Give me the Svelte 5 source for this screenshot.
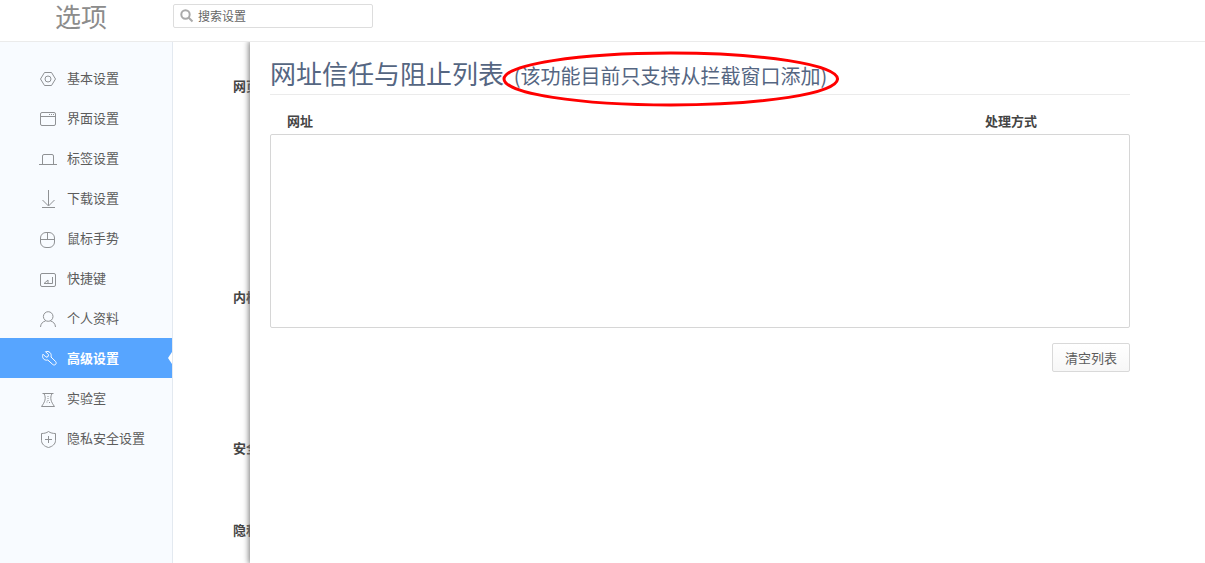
<script>
  const items = [
    { label: '基本设置', icon: 'hex' },
    { label: '界面设置', icon: 'window' },
    { label: '标签设置', icon: 'tab' },
    { label: '下载设置', icon: 'download' },
    { label: '鼠标手势', icon: 'mouse' },
    { label: '快捷键', icon: 'key' },
    { label: '个人资料', icon: 'user' },
    { label: '高级设置', icon: 'wrench' },
    { label: '实验室', icon: 'flask' },
    { label: '隐私安全设置', icon: 'shield' }
  ];
  const paths = {
    hex: 'M5.500 4.500h7l4 6.500-4 6.500h-7L1.500 11zM12 11a3 3 0 1 1-6 0 3 3 0 0 1 6 0z',
    window: 'M3 4.500h12a1.500 1.500 0 0 1 1.500 1.500v10a1.500 1.500 0 0 1-1.500 1.500H3A1.500 1.500 0 0 1 1.500 16V6A1.500 1.500 0 0 1 3 4.500zM1.500 8.500h15M10 6.500h1M12 6.500h1M14 6.500h1',
    tab: 'M0 16.500h18M3.500 16V8a1.500 1.500 0 0 1 1.500-1.500h8A1.500 1.500 0 0 1 14.500 8v8',
    download: 'M9.500 2v15.500M3.500 12l6 6 6-6M3 19.500h13',
    mouse: 'M7 4.500h3a5.500 5.500 0 0 1 5.500 5.500v4a5.500 5.500 0 0 1-5.500 5.500H7A5.500 5.500 0 0 1 1.500 14v-4A5.500 5.500 0 0 1 7 4.500zM1.500 11.500h14M8.500 4.500v7',
    key: 'M3 5.500h12A1.500 1.500 0 0 1 16.500 7v10a1.500 1.500 0 0 1-1.500 1.500H3A1.500 1.500 0 0 1 1.500 17V7A1.500 1.500 0 0 1 3 5.500zM13.500 9v6.500h-8.500l4-3.500v3.500',
    user: 'M14 8.500a4.800 4.800 0 1 1-9.600 0 4.800 4.800 0 0 1 9.600 0zM1.500 19c.2-3.500 2.500-5.500 5-6M16.500 19c-.2-3.500-2.500-5.500-5-6',
    wrench: 'M6.500 3.700l3 3-.5 2-2 .5-3-3C2.500 9.500 5 13 8.800 12l5 4.500c2 1.500 4.400-.8 2.900-2.900L12 9c1-3.700-2-6.500-5.500-5.300z',
    flask: 'M3.500 5.500h11M5 5.500c2.500 5 .8 8.500-2.500 13h13c-3.300-4.500-5-8-2.500-13M9 8v1M9 10v1M9 12v1M7.500 14h1M10 14.500h1',
    shield: 'M9.500 3.500c2 1.500 4.500 2 7 2v7c0 3.500-3 6-7 7-4-1-7-3.500-7-7v-7c2.500 0 5-.5 7-2zM9.500 8v7M6 11.500h7'
  };
  const groups = ['网页', '内核', '安全', '隐私'];
  let active = $state('高级设置');
  let query = $state('');
</script>

<div class="page">
  <header>
    <h1>选项</h1>
    <label class="search">
      <svg viewBox="0 0 14 14" aria-hidden="true">
        <circle cx="5.500" cy="5.500" r="4.200" />
        <path d="M8.500 8.500l4 4" />
      </svg>
      <input type="text" placeholder="搜索设置" aria-label="搜索设置" bind:value={query} />
    </label>
  </header>

  <div class="body">
    <nav>
      {#each items as item}
        <button class="item" class:active={active === item.label} onclick={() => (active = item.label)}>
          <svg viewBox="0 0 18 20" aria-hidden="true"><path d={paths[item.icon]} /></svg>
          <span>{item.label}</span>
        </button>
      {/each}
    </nav>

    <main>
      <div class="groups">
        {#each groups as group}
          <h3>{group}</h3>
        {/each}
      </div>

      <section class="drawer">
        <div class="content">
          <h2>
            网址信任与阻止列表
            <span class="note">
              (该功能目前只支持从拦截窗口添加)
              <svg class="ring" viewBox="0 0 336 56" preserveAspectRatio="none" aria-hidden="true">
                <ellipse cx="168" cy="28" rx="166" ry="26" />
              </svg>
            </span>
          </h2>
          <table>
            <thead>
              <tr><th>网址</th><th class="mode">处理方式</th></tr>
            </thead>
            <tbody>
              <tr><td colspan="2"></td></tr>
            </tbody>
          </table>
          <div class="actions">
            <button class="clear">清空列表</button>
          </div>
        </div>
      </section>
    </main>
  </div>
</div>

<style>
  :global(body) {
    margin: 0;
    background: #fff;
  }
  .page {
    display: flex;
    flex-direction: column;
    min-height: 100vh;
    font-family: 'Noto Sans CJK SC', sans-serif;
    font-size: 13px;
    line-height: 20px;
    color: #5c5c5c;
  }
  .page * {
    box-sizing: border-box;
  }
  h1, h2, h3 {
    margin: 0;
    font-weight: 400;
  }
  button, input {
    font: inherit;
    color: inherit;
  }
  header {
    display: flex;
    align-items: flex-start;
    height: 42px;
    border-bottom: 1px solid #ebebeb;
  }
  h1 {
    width: 173px;
    padding-left: 55px;
    font-size: 26px;
    line-height: 32px;
    color: #8c8c8c;
  }
  .search {
    display: flex;
    align-items: center;
    gap: 4px;
    width: 200px;
    height: 24px;
    margin-top: 4px;
    padding: 0 7px 0 6px;
    border: 1px solid #ddd;
    border-radius: 2px;
  }
  .search svg {
    flex: none;
    width: 14px;
    height: 14px;
    fill: none;
    stroke: #aaa;
    stroke-width: 2;
  }
  .search input {
    flex: 1;
    min-width: 0;
    padding: 0;
    border: 0;
    outline: 0;
    background: none;
    font-size: 12px;
  }
  .search input::placeholder {
    color: #666;
    opacity: 1;
  }
  .body {
    display: flex;
    flex: 1;
  }
  nav {
    flex: none;
    width: 173px;
    padding-top: 16px;
    background: #f8fbff;
    border-right: 1px solid #e3e9f0;
  }
  .item {
    position: relative;
    display: flex;
    align-items: center;
    gap: 10px;
    width: 100%;
    height: 40px;
    padding: 0 0 0 39px;
    border: 0;
    background: none;
    text-align: left;
    cursor: pointer;
  }
  .item svg {
    flex: none;
    width: 18px;
    height: 20px;
    fill: none;
    stroke: #8f9194;
    stroke-width: 1;
  }
  .item.active {
    background: #57a5ff;
    color: #fff;
    font-weight: 700;
  }
  .item.active svg {
    stroke: #fff;
  }
  .item.active::after {
    content: '';
    position: absolute;
    right: 0;
    top: 14px;
    border: solid transparent;
    border-width: 6px 4px 6px 0;
    border-right-color: #fff;
  }
  main {
    position: relative;
    flex: 1;
    min-width: 0;
    overflow: hidden;
  }
  .groups {
    display: grid;
    grid-template-rows: 211px 151px 82px 20px;
    padding: 34px 0 0 60px;
  }
  h3, th {
    font-size: 13px;
    font-weight: 700;
    line-height: 20px;
    color: #444;
  }
  .drawer {
    position: absolute;
    inset: 0 0 0 77px;
    padding: 13px 20px 0;
    background: #fff;
    box-shadow: 0 0 6px 1px #777;
  }
  .content {
    max-width: 860px;
  }
  h2 {
    height: 40px;
    border-bottom: 1px solid #ebebeb;
    font-size: 26px;
    line-height: 36px;
    color: #556682;
    white-space: nowrap;
  }
  .note {
    position: relative;
    display: inline-block;
    margin-left: 4px;
    font-size: 20px;
  }
  .ring {
    position: absolute;
    left: -12px;
    top: -7px;
    width: calc(100% + 24px);
    height: 56px;
    fill: none;
    stroke: #f00;
    stroke-width: 3;
    pointer-events: none;
  }
  table {
    width: 100%;
    margin-top: 16px;
    border-spacing: 0;
    table-layout: fixed;
  }
  th {
    padding: 0 0 3px 17px;
    text-align: left;
  }
  th.mode {
    width: 145px;
    padding-left: 0;
  }
  td {
    height: 194px;
    padding: 0;
    border: 1px solid #d6d6d6;
    border-radius: 2px;
  }
  .actions {
    display: flex;
    justify-content: flex-end;
    margin-top: 15px;
  }
  .clear {
    height: 29px;
    padding: 0 12px;
    border: 1px solid #d9d9d9;
    border-radius: 2px;
    background: linear-gradient(#fff, #f7f7f7);
    cursor: pointer;
  }
</style>
